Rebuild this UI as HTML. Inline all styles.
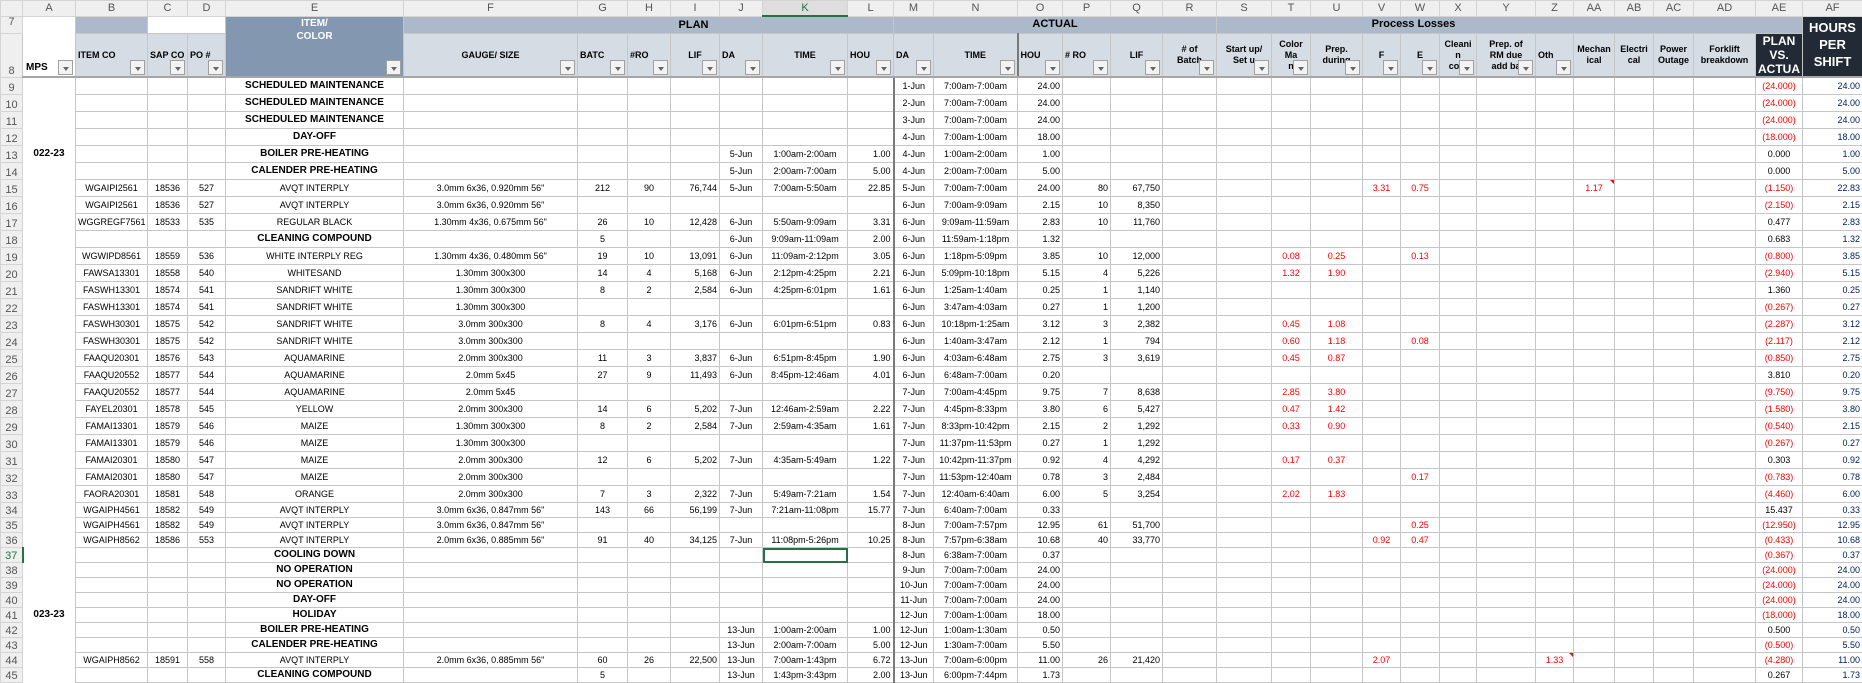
<!DOCTYPE html>
<html><head><meta charset="utf-8"><style>
body{margin:0;background:#fff;width:1862px;height:676px;overflow:hidden;font-family:"Liberation Sans",Arial,sans-serif}
table{border-collapse:collapse;table-layout:fixed;width:1862px}
td,th{padding:0 2px;overflow:hidden;white-space:nowrap;font-size:9px;border:1px solid #c6c6c6;text-align:center;color:#000;line-height:1}
thead tr.L th{height:14px;background:#efefef;color:#555;font-weight:normal;font-size:11px;border-color:#d4d4d4}
thead tr.L th.sel{color:#217346;border-bottom:2px solid #217346;background:#dedede}
th.rn{background:#efefef;color:#555;font-weight:normal;font-size:11px;border-color:#d4d4d4;vertical-align:bottom;padding:0}
th.g{color:#217346;border-right:2px solid #217346}
tr.r7 td{height:16px}
tr.r8 td{height:37px;background:#d6dce4;font-weight:bold;font-size:9px;position:relative;text-align:left;vertical-align:middle;border-bottom:2px solid #a6a6a6;white-space:normal;line-height:11px;padding:0 2px}
.band{background:#acb9ca;font-weight:bold;font-size:11px;color:#000}
.e78{background:#8497b0;color:#fff;font-weight:bold;font-size:10px;vertical-align:top;line-height:13px;position:relative}
.dk{background:#222b35 !important;color:#fff !important;font-weight:bold;text-align:center !important}
i{position:absolute;right:2px;bottom:1px;width:15px;height:15px;background:#f3f3f3;border:1px solid #a0a0a0;box-sizing:border-box}
i:after{content:"";position:absolute;left:4px;top:6px;border-left:3px solid transparent;border-right:3px solid transparent;border-top:4px solid #666}
tbody td{height:16px}
tbody tr.t td{height:14px}
tbody td:nth-child(2){border-top:none;border-bottom:none;font-weight:bold;font-size:10px}
tbody td:nth-child(10),tbody td:nth-child(13),tbody td:nth-child(16),tbody td:nth-child(17),tbody td:nth-child(18),tbody td:nth-child(33){text-align:right}
tbody td:nth-child(14),tr.r8 td:nth-child(14){border-left:2px solid #7a7a7a}
tbody td:nth-child(n+20):nth-child(-n+31){color:#f00}
tbody td:nth-child(33){color:#002060}
tbody td:nth-child(32){color:#f00}
tbody td.k{color:#000 !important}
.s{font-weight:bold;font-size:10px}
.sel2{outline:2px solid #217346;outline-offset:-2px}
.cm{position:relative}
.cm:after{content:"";position:absolute;right:0;top:0;border-left:4px solid transparent;border-top:4px solid #f00}
</style></head><body>
<table>
<colgroup><col style="width:22px"><col style="width:53px"><col style="width:72px"><col style="width:40px"><col style="width:38px"><col style="width:178px"><col style="width:174px"><col style="width:50px"><col style="width:43px"><col style="width:49px"><col style="width:43px"><col style="width:85px"><col style="width:46px"><col style="width:40px"><col style="width:84px"><col style="width:45px"><col style="width:48px"><col style="width:52px"><col style="width:54px"><col style="width:55px"><col style="width:39px"><col style="width:52px"><col style="width:38px"><col style="width:39px"><col style="width:37px"><col style="width:59px"><col style="width:38px"><col style="width:41px"><col style="width:39px"><col style="width:40px"><col style="width:62px"><col style="width:47px"><col style="width:60px"></colgroup>
<thead>
<tr class="L"><th></th><th>A</th><th>B</th><th>C</th><th>D</th><th>E</th><th>F</th><th>G</th><th>H</th><th>I</th><th>J</th><th class="sel">K</th><th>L</th><th>M</th><th>N</th><th>O</th><th>P</th><th>Q</th><th>R</th><th>S</th><th>T</th><th>U</th><th>V</th><th>W</th><th>X</th><th>Y</th><th>Z</th><th>AA</th><th>AB</th><th>AC</th><th>AD</th><th>AE</th><th>AF</th></tr>
<tr class="r7"><th class="rn" style="vertical-align:top">7</th><td rowspan="2" style="position:relative;vertical-align:bottom;text-align:left;font-weight:bold;font-size:10px;padding:0 0 3px 3px;border-bottom:2px solid #a6a6a6">MPS<i></i></td><td class="band"></td><td colspan="2" style="background:#fff"></td><td rowspan="2" class="e78" style="border-bottom:2px solid #a6a6a6">ITEM/<br>COLOR<i></i></td><td colspan="7" class="band" style="padding-left:92px">PLAN</td><td colspan="6" class="band">ACTUAL</td><td colspan="13" class="band" style="padding-right:194px">Process Losses</td><td rowspan="2" class="dk" style="font-size:13px;line-height:17px;vertical-align:top;padding-top:2px;border-bottom:2px solid #a6a6a6">HOURS<br>PER<br>SHIFT</td></tr>
<tr class="r8"><th class="rn">8</th><td>ITEM CO<i></i></td><td>SAP CO<i></i></td><td>PO #<i></i></td><td style="text-align:center">GAUGE/ SIZE<i></i></td><td>BATC<i></i></td><td>#RO<i></i></td><td style="text-align:center">LIF<i></i></td><td>DA<i></i></td><td style="text-align:center">TIME<i></i></td><td>HOU<i></i></td><td>DA<i></i></td><td style="text-align:center">TIME<i></i></td><td>HOU<i></i></td><td>#&nbsp;RO<i></i></td><td style="text-align:center">LIF<i></i></td><td style="text-align:center">#&nbsp;of<br>Batch<i></i></td><td style="text-align:center">Start up/<br>Set u<i></i></td><td style="text-align:center">Color<br>Ma<br>n<i></i></td><td style="text-align:center">Prep.<br>during<i></i></td><td style="text-align:center">F<i></i></td><td style="text-align:center">E<i></i></td><td style="text-align:center">Cleani<br>n<br>com<i></i></td><td style="text-align:center">Prep. of<br>RM due<br>add ba<i></i></td><td>Oth<i></i></td><td style="text-align:center">Mechan<br>ical</td><td style="text-align:center">Electri<br>cal</td><td style="text-align:center">Power<br>Outage</td><td style="text-align:center">Forklift<br>breakdown</td><td class="dk" style="font-size:12px;line-height:14px">PLAN<br>VS.<br>ACTUA</td></tr>
</thead>
<tbody>
<tr><th class="rn">9</th><td></td><td></td><td></td><td></td><td class="s">SCHEDULED MAINTENANCE</td><td></td><td></td><td></td><td></td><td></td><td></td><td></td><td>1-Jun</td><td>7:00am-7:00am</td><td>24.00</td><td></td><td></td><td></td><td></td><td></td><td></td><td></td><td></td><td></td><td></td><td></td><td></td><td></td><td></td><td></td><td>(24.000)</td><td>24.00</td></tr>
<tr><th class="rn">10</th><td></td><td></td><td></td><td></td><td class="s">SCHEDULED MAINTENANCE</td><td></td><td></td><td></td><td></td><td></td><td></td><td></td><td>2-Jun</td><td>7:00am-7:00am</td><td>24.00</td><td></td><td></td><td></td><td></td><td></td><td></td><td></td><td></td><td></td><td></td><td></td><td></td><td></td><td></td><td></td><td>(24.000)</td><td>24.00</td></tr>
<tr><th class="rn">11</th><td></td><td></td><td></td><td></td><td class="s">SCHEDULED MAINTENANCE</td><td></td><td></td><td></td><td></td><td></td><td></td><td></td><td>3-Jun</td><td>7:00am-7:00am</td><td>24.00</td><td></td><td></td><td></td><td></td><td></td><td></td><td></td><td></td><td></td><td></td><td></td><td></td><td></td><td></td><td></td><td>(24.000)</td><td>24.00</td></tr>
<tr><th class="rn">12</th><td></td><td></td><td></td><td></td><td class="s">DAY-OFF</td><td></td><td></td><td></td><td></td><td></td><td></td><td></td><td>4-Jun</td><td>7:00am-1:00am</td><td>18.00</td><td></td><td></td><td></td><td></td><td></td><td></td><td></td><td></td><td></td><td></td><td></td><td></td><td></td><td></td><td></td><td>(18.000)</td><td>18.00</td></tr>
<tr><th class="rn">13</th><td>022-23</td><td></td><td></td><td></td><td class="s">BOILER PRE-HEATING</td><td></td><td></td><td></td><td></td><td>5-Jun</td><td>1:00am-2:00am</td><td>1.00</td><td>4-Jun</td><td>1:00am-2:00am</td><td>1.00</td><td></td><td></td><td></td><td></td><td></td><td></td><td></td><td></td><td></td><td></td><td></td><td></td><td></td><td></td><td></td><td class="k">0.000</td><td>1.00</td></tr>
<tr><th class="rn">14</th><td></td><td></td><td></td><td></td><td class="s">CALENDER PRE-HEATING</td><td></td><td></td><td></td><td></td><td>5-Jun</td><td>2:00am-7:00am</td><td>5.00</td><td>4-Jun</td><td>2:00am-7:00am</td><td>5.00</td><td></td><td></td><td></td><td></td><td></td><td></td><td></td><td></td><td></td><td></td><td></td><td></td><td></td><td></td><td></td><td class="k">0.000</td><td>5.00</td></tr>
<tr><th class="rn">15</th><td></td><td>WGAIPI2561</td><td>18536</td><td>527</td><td>AVQT INTERPLY</td><td>3.0mm 6x36, 0.920mm 56"</td><td>212</td><td>90</td><td>76,744</td><td>5-Jun</td><td>7:00am-5:50am</td><td>22.85</td><td>5-Jun</td><td>7:00am-7:00am</td><td>24.00</td><td>80</td><td>67,750</td><td></td><td></td><td></td><td></td><td>3.31</td><td>0.75</td><td></td><td></td><td></td><td class="cm">1.17</td><td></td><td></td><td></td><td>(1.150)</td><td>22.83</td></tr>
<tr><th class="rn">16</th><td></td><td>WGAIPI2561</td><td>18536</td><td>527</td><td>AVQT INTERPLY</td><td>3.0mm 6x36, 0.920mm 56"</td><td></td><td></td><td></td><td></td><td></td><td></td><td>6-Jun</td><td>7:00am-9:09am</td><td>2.15</td><td>10</td><td>8,350</td><td></td><td></td><td></td><td></td><td></td><td></td><td></td><td></td><td></td><td></td><td></td><td></td><td></td><td>(2.150)</td><td>2.15</td></tr>
<tr><th class="rn">17</th><td></td><td>WGGREGF7561</td><td>18533</td><td>535</td><td>REGULAR BLACK</td><td>1.30mm 4x36, 0.675mm 56"</td><td>26</td><td>10</td><td>12,428</td><td>6-Jun</td><td>5:50am-9:09am</td><td>3.31</td><td>6-Jun</td><td>9:09am-11:59am</td><td>2.83</td><td>10</td><td>11,760</td><td></td><td></td><td></td><td></td><td></td><td></td><td></td><td></td><td></td><td></td><td></td><td></td><td></td><td class="k">0.477</td><td>2.83</td></tr>
<tr><th class="rn">18</th><td></td><td></td><td></td><td></td><td class="s">CLEANING COMPOUND</td><td></td><td>5</td><td></td><td></td><td>6-Jun</td><td>9:09am-11:09am</td><td>2.00</td><td>6-Jun</td><td>11:59am-1:18pm</td><td>1.32</td><td></td><td></td><td></td><td></td><td></td><td></td><td></td><td></td><td></td><td></td><td></td><td></td><td></td><td></td><td></td><td class="k">0.683</td><td>1.32</td></tr>
<tr><th class="rn">19</th><td></td><td>WGWIPD8561</td><td>18559</td><td>536</td><td>WHITE INTERPLY REG</td><td>1.30mm 4x36, 0.480mm 56"</td><td>19</td><td>10</td><td>13,091</td><td>6-Jun</td><td>11:09am-2:12pm</td><td>3.05</td><td>6-Jun</td><td>1:18pm-5:09pm</td><td>3.85</td><td>10</td><td>12,000</td><td></td><td></td><td>0.08</td><td>0.25</td><td></td><td>0.13</td><td></td><td></td><td></td><td></td><td></td><td></td><td></td><td>(0.800)</td><td>3.85</td></tr>
<tr><th class="rn">20</th><td></td><td>FAWSA13301</td><td>18558</td><td>540</td><td>WHITESAND</td><td>1.30mm 300x300</td><td>14</td><td>4</td><td>5,168</td><td>6-Jun</td><td>2:12pm-4:25pm</td><td>2.21</td><td>6-Jun</td><td>5:09pm-10:18pm</td><td>5.15</td><td>4</td><td>5,226</td><td></td><td></td><td>1.32</td><td>1.90</td><td></td><td></td><td></td><td></td><td></td><td></td><td></td><td></td><td></td><td>(2.940)</td><td>5.15</td></tr>
<tr><th class="rn">21</th><td></td><td>FASWH13301</td><td>18574</td><td>541</td><td>SANDRIFT WHITE</td><td>1.30mm 300x300</td><td>8</td><td>2</td><td>2,584</td><td>6-Jun</td><td>4:25pm-6:01pm</td><td>1.61</td><td>6-Jun</td><td>1:25am-1:40am</td><td>0.25</td><td>1</td><td>1,140</td><td></td><td></td><td></td><td></td><td></td><td></td><td></td><td></td><td></td><td></td><td></td><td></td><td></td><td class="k">1.360</td><td>0.25</td></tr>
<tr><th class="rn">22</th><td></td><td>FASWH13301</td><td>18574</td><td>541</td><td>SANDRIFT WHITE</td><td>1.30mm 300x300</td><td></td><td></td><td></td><td></td><td></td><td></td><td>6-Jun</td><td>3:47am-4:03am</td><td>0.27</td><td>1</td><td>1,200</td><td></td><td></td><td></td><td></td><td></td><td></td><td></td><td></td><td></td><td></td><td></td><td></td><td></td><td>(0.267)</td><td>0.27</td></tr>
<tr><th class="rn">23</th><td></td><td>FASWH30301</td><td>18575</td><td>542</td><td>SANDRIFT WHITE</td><td>3.0mm 300x300</td><td>8</td><td>4</td><td>3,176</td><td>6-Jun</td><td>6:01pm-6:51pm</td><td>0.83</td><td>6-Jun</td><td>10:18pm-1:25am</td><td>3.12</td><td>3</td><td>2,382</td><td></td><td></td><td>0.45</td><td>1.08</td><td></td><td></td><td></td><td></td><td></td><td></td><td></td><td></td><td></td><td>(2.287)</td><td>3.12</td></tr>
<tr><th class="rn">24</th><td></td><td>FASWH30301</td><td>18575</td><td>542</td><td>SANDRIFT WHITE</td><td>3.0mm 300x300</td><td></td><td></td><td></td><td></td><td></td><td></td><td>6-Jun</td><td>1:40am-3:47am</td><td>2.12</td><td>1</td><td>794</td><td></td><td></td><td>0.60</td><td>1.18</td><td></td><td>0.08</td><td></td><td></td><td></td><td></td><td></td><td></td><td></td><td>(2.117)</td><td>2.12</td></tr>
<tr><th class="rn">25</th><td></td><td>FAAQU20301</td><td>18576</td><td>543</td><td>AQUAMARINE</td><td>2.0mm 300x300</td><td>11</td><td>3</td><td>3,837</td><td>6-Jun</td><td>6:51pm-8:45pm</td><td>1.90</td><td>6-Jun</td><td>4:03am-6:48am</td><td>2.75</td><td>3</td><td>3,619</td><td></td><td></td><td>0.45</td><td>0.87</td><td></td><td></td><td></td><td></td><td></td><td></td><td></td><td></td><td></td><td>(0.850)</td><td>2.75</td></tr>
<tr><th class="rn">26</th><td></td><td>FAAQU20552</td><td>18577</td><td>544</td><td>AQUAMARINE</td><td>2.0mm 5x45</td><td>27</td><td>9</td><td>11,493</td><td>6-Jun</td><td>8:45pm-12:46am</td><td>4.01</td><td>6-Jun</td><td>6:48am-7:00am</td><td>0.20</td><td></td><td></td><td></td><td></td><td></td><td></td><td></td><td></td><td></td><td></td><td></td><td></td><td></td><td></td><td></td><td class="k">3.810</td><td>0.20</td></tr>
<tr><th class="rn">27</th><td></td><td>FAAQU20552</td><td>18577</td><td>544</td><td>AQUAMARINE</td><td>2.0mm 5x45</td><td></td><td></td><td></td><td></td><td></td><td></td><td>7-Jun</td><td>7:00am-4:45pm</td><td>9.75</td><td>7</td><td>8,638</td><td></td><td></td><td>2.85</td><td>3.80</td><td></td><td></td><td></td><td></td><td></td><td></td><td></td><td></td><td></td><td>(9.750)</td><td>9.75</td></tr>
<tr><th class="rn">28</th><td></td><td>FAYEL20301</td><td>18578</td><td>545</td><td>YELLOW</td><td>2.0mm 300x300</td><td>14</td><td>6</td><td>5,202</td><td>7-Jun</td><td>12:46am-2:59am</td><td>2.22</td><td>7-Jun</td><td>4:45pm-8:33pm</td><td>3.80</td><td>6</td><td>5,427</td><td></td><td></td><td>0.47</td><td>1.42</td><td></td><td></td><td></td><td></td><td></td><td></td><td></td><td></td><td></td><td>(1.580)</td><td>3.80</td></tr>
<tr><th class="rn">29</th><td></td><td>FAMAI13301</td><td>18579</td><td>546</td><td>MAIZE</td><td>1.30mm 300x300</td><td>8</td><td>2</td><td>2,584</td><td>7-Jun</td><td>2:59am-4:35am</td><td>1.61</td><td>7-Jun</td><td>8:33pm-10:42pm</td><td>2.15</td><td>2</td><td>1,292</td><td></td><td></td><td>0.33</td><td>0.90</td><td></td><td></td><td></td><td></td><td></td><td></td><td></td><td></td><td></td><td>(0.540)</td><td>2.15</td></tr>
<tr><th class="rn">30</th><td></td><td>FAMAI13301</td><td>18579</td><td>546</td><td>MAIZE</td><td>1.30mm 300x300</td><td></td><td></td><td></td><td></td><td></td><td></td><td>7-Jun</td><td>11:37pm-11:53pm</td><td>0.27</td><td>1</td><td>1,292</td><td></td><td></td><td></td><td></td><td></td><td></td><td></td><td></td><td></td><td></td><td></td><td></td><td></td><td>(0.267)</td><td>0.27</td></tr>
<tr><th class="rn">31</th><td></td><td>FAMAI20301</td><td>18580</td><td>547</td><td>MAIZE</td><td>2.0mm 300x300</td><td>12</td><td>6</td><td>5,202</td><td>7-Jun</td><td>4:35am-5:49am</td><td>1.22</td><td>7-Jun</td><td>10:42pm-11:37pm</td><td>0.92</td><td>4</td><td>4,292</td><td></td><td></td><td>0.17</td><td>0.37</td><td></td><td></td><td></td><td></td><td></td><td></td><td></td><td></td><td></td><td class="k">0.303</td><td>0.92</td></tr>
<tr><th class="rn">32</th><td></td><td>FAMAI20301</td><td>18580</td><td>547</td><td>MAIZE</td><td>2.0mm 300x300</td><td></td><td></td><td></td><td></td><td></td><td></td><td>7-Jun</td><td>11:53pm-12:40am</td><td>0.78</td><td>3</td><td>2,484</td><td></td><td></td><td></td><td></td><td></td><td>0.17</td><td></td><td></td><td></td><td></td><td></td><td></td><td></td><td>(0.783)</td><td>0.78</td></tr>
<tr><th class="rn">33</th><td></td><td>FAORA20301</td><td>18581</td><td>548</td><td>ORANGE</td><td>2.0mm 300x300</td><td>7</td><td>3</td><td>2,322</td><td>7-Jun</td><td>5:49am-7:21am</td><td>1.54</td><td>7-Jun</td><td>12:40am-6:40am</td><td>6.00</td><td>5</td><td>3,254</td><td></td><td></td><td>2.02</td><td>1.83</td><td></td><td></td><td></td><td></td><td></td><td></td><td></td><td></td><td></td><td>(4.460)</td><td>6.00</td></tr>
<tr class="t"><th class="rn">34</th><td></td><td>WGAIPH4561</td><td>18582</td><td>549</td><td>AVQT INTERPLY</td><td>3.0mm 6x36, 0.847mm 56"</td><td>143</td><td>66</td><td>56,199</td><td>7-Jun</td><td>7:21am-11:08pm</td><td>15.77</td><td>7-Jun</td><td>6:40am-7:00am</td><td>0.33</td><td></td><td></td><td></td><td></td><td></td><td></td><td></td><td></td><td></td><td></td><td></td><td></td><td></td><td></td><td></td><td class="k">15.437</td><td>0.33</td></tr>
<tr class="t"><th class="rn">35</th><td></td><td>WGAIPH4561</td><td>18582</td><td>549</td><td>AVQT INTERPLY</td><td>3.0mm 6x36, 0.847mm 56"</td><td></td><td></td><td></td><td></td><td></td><td></td><td>8-Jun</td><td>7:00am-7:57pm</td><td>12.95</td><td>61</td><td>51,700</td><td></td><td></td><td></td><td></td><td></td><td>0.25</td><td></td><td></td><td></td><td></td><td></td><td></td><td></td><td>(12.950)</td><td>12.95</td></tr>
<tr class="t"><th class="rn">36</th><td></td><td>WGAIPH8562</td><td>18586</td><td>553</td><td>AVQT INTERPLY</td><td>2.0mm 6x36, 0.885mm 56"</td><td>91</td><td>40</td><td>34,125</td><td>7-Jun</td><td>11:08pm-5:26pm</td><td>10.25</td><td>8-Jun</td><td>7:57pm-6:38am</td><td>10.68</td><td>40</td><td>33,770</td><td></td><td></td><td></td><td></td><td>0.92</td><td>0.47</td><td></td><td></td><td></td><td></td><td></td><td></td><td></td><td>(0.433)</td><td>10.68</td></tr>
<tr class="t"><th class="rn g">37</th><td></td><td></td><td></td><td></td><td class="s">COOLING DOWN</td><td></td><td></td><td></td><td></td><td></td><td class="sel2"></td><td></td><td>8-Jun</td><td>6:38am-7:00am</td><td>0.37</td><td></td><td></td><td></td><td></td><td></td><td></td><td></td><td></td><td></td><td></td><td></td><td></td><td></td><td></td><td></td><td>(0.367)</td><td>0.37</td></tr>
<tr class="t"><th class="rn">38</th><td></td><td></td><td></td><td></td><td class="s">NO OPERATION</td><td></td><td></td><td></td><td></td><td></td><td></td><td></td><td>9-Jun</td><td>7:00am-7:00am</td><td>24.00</td><td></td><td></td><td></td><td></td><td></td><td></td><td></td><td></td><td></td><td></td><td></td><td></td><td></td><td></td><td></td><td>(24.000)</td><td>24.00</td></tr>
<tr class="t"><th class="rn">39</th><td></td><td></td><td></td><td></td><td class="s">NO OPERATION</td><td></td><td></td><td></td><td></td><td></td><td></td><td></td><td>10-Jun</td><td>7:00am-7:00am</td><td>24.00</td><td></td><td></td><td></td><td></td><td></td><td></td><td></td><td></td><td></td><td></td><td></td><td></td><td></td><td></td><td></td><td>(24.000)</td><td>24.00</td></tr>
<tr class="t"><th class="rn">40</th><td></td><td></td><td></td><td></td><td class="s">DAY-OFF</td><td></td><td></td><td></td><td></td><td></td><td></td><td></td><td>11-Jun</td><td>7:00am-7:00am</td><td>24.00</td><td></td><td></td><td></td><td></td><td></td><td></td><td></td><td></td><td></td><td></td><td></td><td></td><td></td><td></td><td></td><td>(24.000)</td><td>24.00</td></tr>
<tr class="t"><th class="rn">41</th><td>023-23</td><td></td><td></td><td></td><td class="s">HOLIDAY</td><td></td><td></td><td></td><td></td><td></td><td></td><td></td><td>12-Jun</td><td>7:00am-1:00am</td><td>18.00</td><td></td><td></td><td></td><td></td><td></td><td></td><td></td><td></td><td></td><td></td><td></td><td></td><td></td><td></td><td></td><td>(18.000)</td><td>18.00</td></tr>
<tr class="t"><th class="rn">42</th><td></td><td></td><td></td><td></td><td class="s">BOILER PRE-HEATING</td><td></td><td></td><td></td><td></td><td>13-Jun</td><td>1:00am-2:00am</td><td>1.00</td><td>12-Jun</td><td>1:00am-1:30am</td><td>0.50</td><td></td><td></td><td></td><td></td><td></td><td></td><td></td><td></td><td></td><td></td><td></td><td></td><td></td><td></td><td></td><td class="k">0.500</td><td>0.50</td></tr>
<tr class="t"><th class="rn">43</th><td></td><td></td><td></td><td></td><td class="s">CALENDER PRE-HEATING</td><td></td><td></td><td></td><td></td><td>13-Jun</td><td>2:00am-7:00am</td><td>5.00</td><td>12-Jun</td><td>1:30am-7:00am</td><td>5.50</td><td></td><td></td><td></td><td></td><td></td><td></td><td></td><td></td><td></td><td></td><td></td><td></td><td></td><td></td><td></td><td>(0.500)</td><td>5.50</td></tr>
<tr class="t"><th class="rn">44</th><td></td><td>WGAIPH8562</td><td>18591</td><td>558</td><td>AVQT INTERPLY</td><td>2.0mm 6x36, 0.885mm 56"</td><td>60</td><td>26</td><td>22,500</td><td>13-Jun</td><td>7:00am-1:43pm</td><td>6.72</td><td>13-Jun</td><td>7:00am-6:00pm</td><td>11.00</td><td>26</td><td>21,420</td><td></td><td></td><td></td><td></td><td>2.07</td><td></td><td></td><td></td><td class="cm">1.33</td><td></td><td></td><td></td><td></td><td>(4.280)</td><td>11.00</td></tr>
<tr class="t"><th class="rn">45</th><td></td><td></td><td></td><td></td><td class="s">CLEANING COMPOUND</td><td></td><td>5</td><td></td><td></td><td>13-Jun</td><td>1:43pm-3:43pm</td><td>2.00</td><td>13-Jun</td><td>6:00pm-7:44pm</td><td>1.73</td><td></td><td></td><td></td><td></td><td></td><td></td><td></td><td></td><td></td><td></td><td></td><td></td><td></td><td></td><td></td><td class="k">0.267</td><td>1.73</td></tr>
</tbody></table>
</body></html>
